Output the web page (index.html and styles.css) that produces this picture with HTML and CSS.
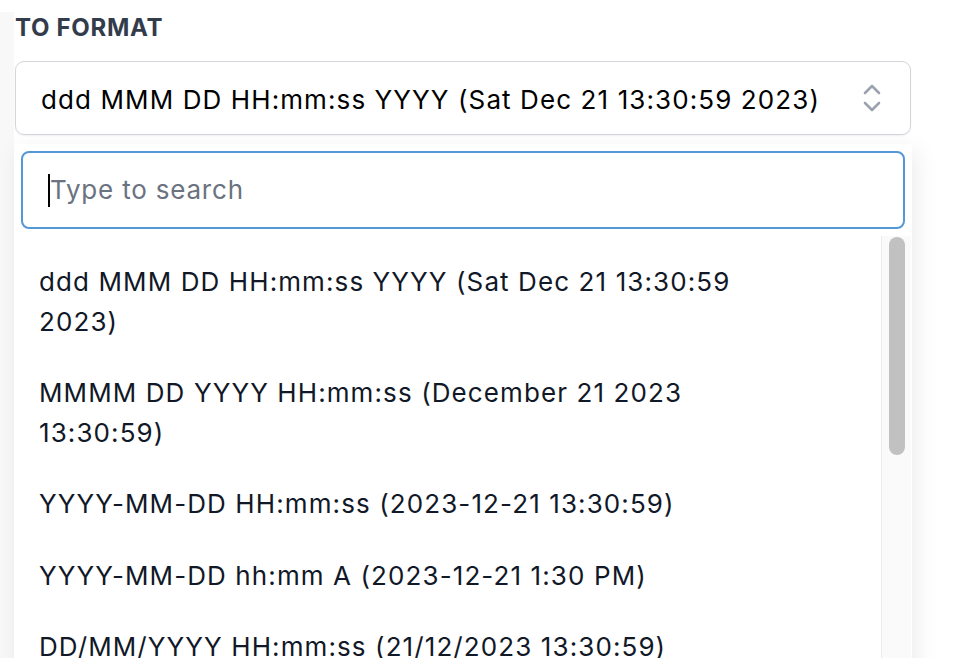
FILE: index.html
```html
<!DOCTYPE html>
<html lang="en">
<head>
<meta charset="utf-8">
<title>To format</title>
<link rel="stylesheet" href="styles.css">
</head>
<body>
<div class="page">
  <div class="card">
    <div class="label">TO FORMAT</div>
    <div class="select">
      <span class="select-value">ddd MMM DD HH:mm:ss YYYY (Sat Dec 21 13:30:59 2023)</span>
      <svg class="chev" width="18" height="28" viewBox="0 0 18 28" aria-hidden="true">
        <path d="M2 9 L9 2 L16 9" fill="none" stroke="#9ca3af" stroke-width="2.6" stroke-linecap="round" stroke-linejoin="round"/>
        <path d="M2 19 L9 26 L16 19" fill="none" stroke="#9ca3af" stroke-width="2.6" stroke-linecap="round" stroke-linejoin="round"/>
      </svg>
    </div>
    <div class="popover">
      <div class="search">
        <span class="caret"></span>
        <span class="placeholder">Type to search</span>
      </div>
      <div class="listwrap">
        <ul class="list">
          <li class="item"><span class="txt">ddd MMM DD HH:mm:ss YYYY (Sat Dec 21 13:30:59 2023)</span></li>
          <li class="item"><span class="txt">MMMM DD YYYY HH:mm:ss (December 21 2023 13:30:59)</span></li>
          <li class="item"><span class="txt">YYYY-MM-DD HH:mm:ss (2023-12-21 13:30:59)</span></li>
          <li class="item"><span class="txt">YYYY-MM-DD hh:mm A (2023-12-21 1:30 PM)</span></li>
          <li class="item"><span class="txt">DD/MM/YYYY HH:mm:ss (21/12/2023 13:30:59)</span></li>
        </ul>
        <div class="scrollbar"><div class="thumb"></div></div>
      </div>
    </div>
  </div>
</div>
</body>
</html>
```

FILE: styles.css
```css
* { box-sizing: border-box; }
html, body {
  margin: 0;
  padding: 0;
  background: #ffffff;
  height: 100%;
  overflow: hidden;
}
body {
  font-family: Inter, "Noto Sans", "Liberation Sans", sans-serif;
}
.page {
  padding-top: 12px;
  padding-left: 14px;
  width: 956px;
  height: 658px;
  overflow: hidden;
}
.card {
  width: 898px;
  height: 700px;
  background: #ffffff;
  padding: 0 1px;
  box-shadow: -14px 0 0 0 #f8f8f9;
  display: flex;
  flex-direction: column;
}
.label {
  flex-shrink: 0;
  font-size: 24px;
  font-weight: 700;
  color: #333c4b;
  letter-spacing: 0.7px;
  line-height: 32px;
  height: 49px;
}
.select {
  flex-shrink: 0;
  height: 74px;
  border: 1px solid #d2d5da;
  border-radius: 9px;
  display: flex;
  align-items: center;
  justify-content: space-between;
  padding: 3px 29px 0 25px;
  box-shadow: 0 1px 2px rgba(0,0,0,0.06);
}
.select-value {
  font-size: 26px;
  letter-spacing: 1.1px;
  color: #000000;
  white-space: nowrap;
}
.chev { display: block; margin-top: -3px; }
.popover {
  margin: 9px -1px 0;
  background: #ffffff;
  padding: 7px 7px 0 7px;
  box-shadow: 4px 6px 22px rgba(0,0,0,0.08);
  flex: 1;
  min-height: 0;
  display: flex;
  flex-direction: column;
}
.search {
  flex-shrink: 0;
  height: 78px;
  border: 2px solid #5499d6;
  border-radius: 8px;
  display: flex;
  align-items: center;
  padding-left: 25px;
}
.caret {
  width: 2px;
  height: 33px;
  background: #000;
}
.placeholder {
  font-size: 26px;
  letter-spacing: 0.8px;
  color: #6b7280;
  margin-top: -1px;
}
.listwrap {
  margin: 7px -7px 0 -7px;
  display: flex;
  flex: 1;
  min-height: 0;
}
.list {
  list-style: none;
  margin: 0;
  padding: 10px 0 0 0;
  flex: 1;
}
.item {
  padding: 16px 0 16px 25px;
  font-size: 26px;
  letter-spacing: 1.1px;
  line-height: 39.5px;
  color: #111827;
}
.txt {
  display: block;
  max-width: 726px;
}
.scrollbar {
  width: 30px;
  background: #fafafa;
  border-left: 1px solid #ececec;
  padding: 1px 5px 0 7px;
  margin-right: 1px;
}
.thumb {
  width: 16px;
  height: 218px;
  border-radius: 8px;
  background: #c1c1c1;
}
```
